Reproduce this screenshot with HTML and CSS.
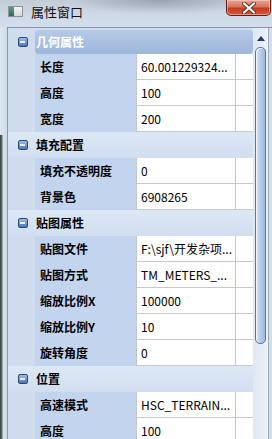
FILE: index.html
```html
<!DOCTYPE html>
<html lang="zh-CN">
<head>
  <meta charset="UTF-8">
  <meta name="viewport" content="width=device-width, initial-scale=1.0">
  <link rel="stylesheet" href="styles.css">
  <title>属性窗口</title>
</head>
<body>
  <div class="window">
    <div class="titlebar">
      <span class="app-icon"><span class="app-icon-side"></span></span>
      <span class="title">属性窗口</span>
      <div class="close-btn">
        <svg width="14" height="12" viewBox="0 0 14 12">
          <path d="M2 1.5 L12 10.5 M12 1.5 L2 10.5" stroke="#5a2a22" stroke-width="4" stroke-linecap="round"/>
          <path d="M2 1.5 L12 10.5 M12 1.5 L2 10.5" stroke="#fff" stroke-width="2.2" stroke-linecap="round"/>
        </svg>
      </div>
    </div>

    <div class="client">
      <div class="grid">
        <div class="cat selected">
          <span class="toggle"><span class="minus"></span></span>
          <span class="cat-name">几何属性</span>
        </div>
        <div class="row"><span class="gutter"></span><span class="label">长度</span><span class="value">60.001229324...</span><span class="extra"></span></div>
        <div class="row"><span class="gutter"></span><span class="label">高度</span><span class="value">100</span><span class="extra"></span></div>
        <div class="row"><span class="gutter"></span><span class="label">宽度</span><span class="value">200</span><span class="extra"></span></div>

        <div class="cat">
          <span class="toggle"><span class="minus"></span></span>
          <span class="cat-name">填充配置</span>
        </div>
        <div class="row"><span class="gutter"></span><span class="label">填充不透明度</span><span class="value">0</span><span class="extra"></span></div>
        <div class="row"><span class="gutter"></span><span class="label">背景色</span><span class="value">6908265</span><span class="extra"></span></div>

        <div class="cat">
          <span class="toggle"><span class="minus"></span></span>
          <span class="cat-name">贴图属性</span>
        </div>
        <div class="row"><span class="gutter"></span><span class="label">贴图文件</span><span class="value">F:\sjf\开发杂项...</span><span class="extra"></span></div>
        <div class="row"><span class="gutter"></span><span class="label">贴图方式</span><span class="value">TM_METERS_...</span><span class="extra"></span></div>
        <div class="row"><span class="gutter"></span><span class="label">缩放比例X</span><span class="value">100000</span><span class="extra"></span></div>
        <div class="row"><span class="gutter"></span><span class="label">缩放比例Y</span><span class="value">10</span><span class="extra"></span></div>
        <div class="row"><span class="gutter"></span><span class="label">旋转角度</span><span class="value">0</span><span class="extra"></span></div>

        <div class="cat">
          <span class="toggle"><span class="minus"></span></span>
          <span class="cat-name">位置</span>
        </div>
        <div class="row"><span class="gutter"></span><span class="label">高速模式</span><span class="value">HSC_TERRAIN...</span><span class="extra"></span></div>
        <div class="row"><span class="gutter"></span><span class="label">高度</span><span class="value">100</span><span class="extra"></span></div>
      </div>

      <div class="scrollbar">
        <span class="arrow-up"></span>
        <span class="thumb"></span>
      </div>
      <div class="frame-right"></div>
    </div>
  </div>
</body>
</html>
```

FILE: styles.css
```css
body {
  margin: 0;
  font-family: "Noto Sans CJK SC", "Noto Sans", sans-serif;
  font-size: 12px;
  color: #000;
  background: #cfdbea;
  overflow: hidden;
}

.window {
  width: 272px;
  height: 439px;
  display: flex;
  flex-direction: column;
  /* desktop showing through the glass on the left edge */
  background:
    linear-gradient(90deg, #34443a 0, #5d6c64 2px, #d6e1ee 3px, #cddaea 7px) 0 135px / 7px 100% no-repeat,
    linear-gradient(90deg, #dfe6ee 0, #cddaea 7px);
}

/* title bar, aero glass */
.titlebar {
  height: 27px;
  display: flex;
  align-items: flex-start;
  background:
    radial-gradient(ellipse 90px 14px at 160px 0, rgba(120, 130, 140, 0.55), rgba(120, 130, 140, 0) 100%),
    linear-gradient(#c3ccd6, #cfdae8 60%, #d2deec);
}

.app-icon {
  width: 13px;
  height: 9px;
  margin: 6px 0 0 8px;
  border: 1px solid #8c9196;
  background: linear-gradient(#f4f4f4, #d8d8d8);
  display: flex;
}

.app-icon-side {
  width: 5px;
  background: linear-gradient(#5d9a8a, #2f6a5c);
}

.title {
  margin: 3px 0 0 8px;
  font-size: 13px;
  line-height: 18px;
  color: #111;
}

.close-btn {
  margin-left: auto;
  margin-right: 1px;
  width: 43px;
  height: 15px;
  border: 1px solid #5e2016;
  border-top: none;
  border-radius: 0 0 5px 5px;
  background: linear-gradient(#e7a797, #d8735d 45%, #c43c20 55%, #d85a3a);
  display: flex;
  align-items: center;
  justify-content: center;
  box-shadow: inset 0 0 0 1px rgba(255, 220, 210, 0.5);
}

/* client area */
.client {
  flex: 1;
  display: flex;
  margin-left: 7px;
  border-top: 1px solid #8597ae;
  border-left: 1px solid #8597ae;
  overflow: hidden;
}

.grid {
  width: 246px;
  background: #cfdcee;
}

.row,
.cat {
  height: 26px;
  display: flex;
}

.gutter {
  width: 27px;
  background: #cfdcee;
}

.label {
  width: 96px;
  padding-left: 5px;
  border-right: 1px solid #c2c7ce;
  background: #c3d5ee;
  line-height: 26px;
  font-weight: bold;
  white-space: nowrap;
  overflow: hidden;
}

.value {
  width: 94px;
  padding-left: 4px;
  border-right: 1px solid #c2c7ce;
  border-bottom: 1px solid #c9c9c9;
  background: #fff;
  line-height: 25px;
  white-space: nowrap;
  overflow: hidden;
}

.extra {
  flex: 1;
  background: #fff;
  border-bottom: 1px solid #c9c9c9;
}

.cat {
  align-items: center;
  background: linear-gradient(#dde8f5, #d0def0);
  font-weight: bold;
}

.toggle {
  width: 27px;
  display: flex;
  justify-content: center;
  padding-left: 2px;
  box-sizing: border-box;
}

.minus {
  width: 8px;
  height: 8px;
  border: 1px solid #28487e;
  border-radius: 2px;
  background: linear-gradient(#9dbbe6, #4f77b6);
  display: flex;
  align-items: center;
  justify-content: center;
}

.minus::before {
  content: "";
  width: 5px;
  height: 2px;
  background: #e8f0fb;
}

.cat-name {
  padding-left: 1px;
  line-height: 24px;
}

.cat.selected {
  background: #cfdcee;
  align-items: flex-end;
}

.cat.selected .toggle {
  align-self: center;
  margin-top: 2px;
}

.cat.selected .cat-name {
  flex: 1;
  height: 24px;
  border-radius: 4px;
  background: linear-gradient(#b6cae6, #9db6db);
  color: #fff;
}

/* scrollbar */
.scrollbar {
  width: 15px;
  display: flex;
  flex-direction: column;
  align-items: center;
  background: linear-gradient(90deg, #dfe7f1, #edf2f8);
}

.arrow-up {
  margin-top: 8px;
  width: 0;
  height: 0;
  border-left: 4px solid transparent;
  border-right: 4px solid transparent;
  border-bottom: 5px solid #1d3c6c;
}

.thumb {
  margin-top: 6px;
  width: 9px;
  height: 295px;
  border: 1px solid #58769f;
  border-radius: 5px;
  background: linear-gradient(90deg, #d9e6f6, #b4cbea 50%, #9fbbe2);
  box-shadow: inset 1px 1px 0 #f2f7fd;
}

.frame-right {
  width: 3px;
  border-left: 1px solid #9aabbf;
  background: #d2deec;
}
```
